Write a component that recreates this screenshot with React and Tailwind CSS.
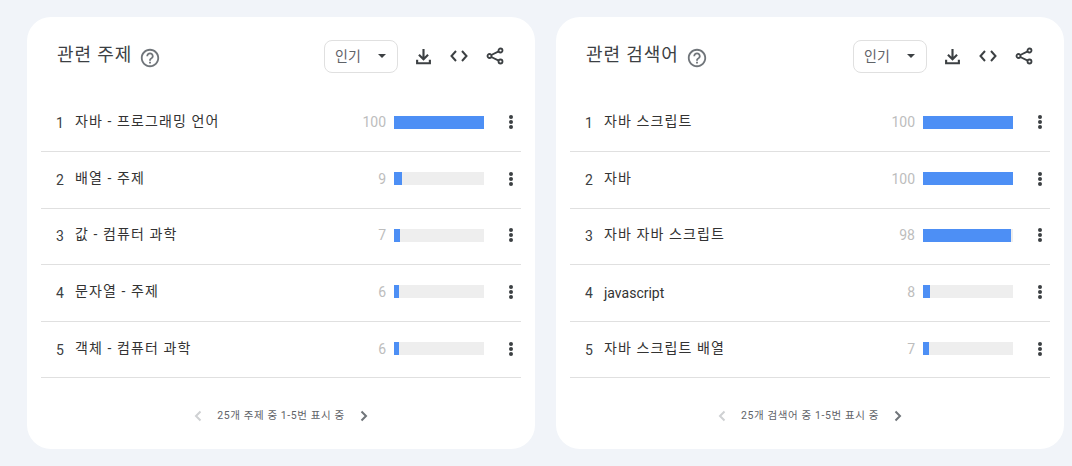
const panels = [
  {
    title: "관련 주제",
    footer: "25개 주제 중 1-5번 표시 중",
    rows: [
      ["자바 - 프로그래밍 언어", 100],
      ["배열 - 주제", 9],
      ["값 - 컴퓨터 과학", 7],
      ["문자열 - 주제", 6],
      ["객체 - 컴퓨터 과학", 6],
    ],
  },
  {
    title: "관련 검색어",
    footer: "25개 검색어 중 1-5번 표시 중",
    rows: [
      ["자바 스크립트", 100],
      ["자바", 100],
      ["자바 자바 스크립트", 98],
      ["javascript", 8],
      ["자바 스크립트 배열", 7],
    ],
  },
];

const HelpIcon = () => (
  <svg width="22" height="22" viewBox="0 0 24 24" fill="#70757a">
    <path d="M11 18h2v-2h-2v2zm1-16C6.48 2 2 6.48 2 12s4.48 10 10 10 10-4.48 10-10S17.52 2 12 2zm0 18c-4.41 0-8-3.59-8-8s3.59-8 8-8 8 3.59 8 8-3.59 8-8 8zm0-14c-2.21 0-4 1.79-4 4h2c0-1.1.9-2 2-2s2 .9 2 2c0 2-3 1.75-3 5h2c0-2.25 3-2.5 3-5 0-2.21-1.79-4-4-4z" />
  </svg>
);

const DownloadIcon = () => (
  <svg width="17" height="17" viewBox="0 0 16 16" fill="#3c4043">
    <path d="M7 1h2v7.2l2.6-2.6L13 7l-5 5-5-5 1.4-1.4L7 8.2V1z" />
    <path d="M1 11h2v2.400h10V11h2v4.400H1V11z" />
  </svg>
);

const CodeIcon = () => (
  <svg width="18" height="14" viewBox="0 0 18 14" fill="none" stroke="#3c4043" strokeWidth="2">
    <path d="M6 2 1.500 7 6 12" />
    <path d="M12 2l4.500 5L12 12" />
  </svg>
);

const ShareIcon = () => (
  <svg width="18" height="18" viewBox="0 0 18 18" fill="none" stroke="#3c4043" strokeWidth="1.8">
    <circle cx="14.500" cy="3.500" r="2" />
    <circle cx="3.500" cy="9" r="2" />
    <circle cx="14.500" cy="14.500" r="2" />
    <path d="M5.300 8 12.700 4.400M5.300 10 12.700 13.600" />
  </svg>
);

const MoreIcon = () => (
  <div className="flex flex-col items-center gap-[1px] -translate-y-[1px]">
    <span className="w-1 h-1 rounded-full bg-[#3c4043]" />
    <span className="w-1 h-1 rounded-full bg-[#3c4043]" />
    <span className="w-1 h-1 rounded-full bg-[#3c4043]" />
  </div>
);

const Chevron = ({ dir, color }) => (
  <svg width="10" height="12" viewBox="0 0 10 12" fill="none" stroke={color} strokeWidth="2">
    <path d={dir === "left" ? "M7.500 1.500 3 6l4.500 4.500" : "M2.500 1.500 7 6l-4.500 4.500"} />
  </svg>
);

const Row = ({ index, label, value }) => (
  <div className="h-[56.600px] flex items-center border-b border-[#e0e0e0] pl-[15px]">
    <span className="w-[19px] text-sm text-[#3c4043]">{index}</span>
    <span className={`flex-1 text-sm text-[#333] -translate-y-[2px] ${/[가-힣]/.test(label) ? "tracking-[1.1px]" : "translate-y-[0px]"}`}>{label}</span>
    <span className="text-sm text-[#bdbdbd] mr-[8px] -translate-y-[1px]">{value}</span>
    <div className="w-[90px] h-[13px] bg-[#eeeeee] -translate-y-[1px]">
      <div className="h-full bg-[#4d8ff5]" style={{ width: `${value}%` }} />
    </div>
    <div className="w-[4px] ml-[25px] mr-[8px]">
      <MoreIcon />
    </div>
  </div>
);

const Panel = ({ title, footer, rows }) => (
  <div className="w-[508px] h-[432px] bg-white rounded-[24px] px-[14px] flex flex-col">
    <div className="h-[78.400px] shrink-0 flex items-center pl-[16px] pr-[17px]">
      <h2 className="text-lg text-[#3c4043] tracking-[0.9px] -translate-y-[1px]">{title}</h2>
      <span className="ml-[7px] mt-[3px]">
        <HelpIcon />
      </span>
      <button className="ml-auto w-[74px] h-[33px] border border-[#e0e0e0] rounded-lg flex items-center justify-between pl-[10px] pr-[11px] text-sm text-[#5f6368]">
        인기
        <span className="w-0 h-0 border-x-[4px] border-x-transparent border-t-[4px] border-t-[#3c4043]" />
      </button>
      <div className="flex items-center ml-[17px] gap-[18px]">
        <DownloadIcon />
        <CodeIcon />
        <ShareIcon />
      </div>
    </div>
    {rows.map((r, i) => (
      <Row key={r[0]} index={i + 1} label={r[0]} value={r[1]} />
    ))}
    <div className="flex items-center justify-center gap-[14px] mt-[30px]">
      <Chevron dir="left" color="#cfd1d3" />
      <span className="text-[10.500px] tracking-[0.6px] text-[#5f6368]">{footer}</span>
      <Chevron dir="right" color="#70757a" />
    </div>
  </div>
);

export default function App() {
  return (
    <div className="min-h-screen bg-[#f1f4f9] pt-[17px] pl-[27px] flex gap-[21px] font-['Roboto','Noto_Sans_CJK_KR',sans-serif]">
      {panels.map((p) => (
        <Panel key={p.title} {...p} />
      ))}
    </div>
  );
}
